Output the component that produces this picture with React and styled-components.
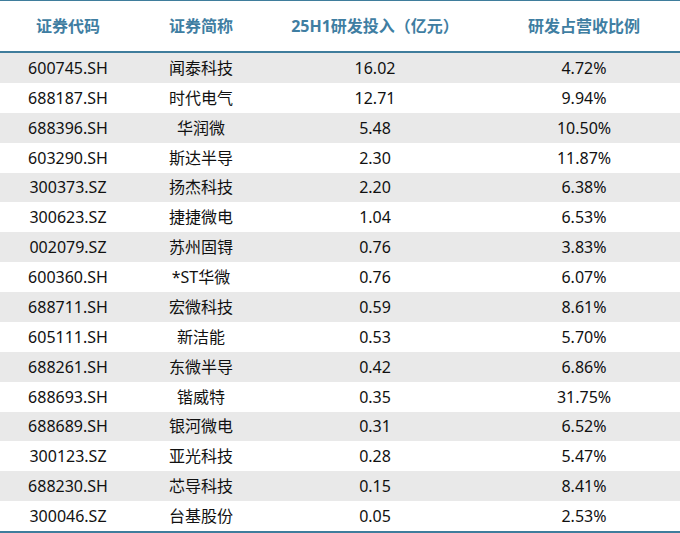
import styled, { createGlobalStyle } from "styled-components";

const rows = [
  ["600745.SH", "闻泰科技", "16.02", "4.72%"],
  ["688187.SH", "时代电气", "12.71", "9.94%"],
  ["688396.SH", "华润微", "5.48", "10.50%"],
  ["603290.SH", "斯达半导", "2.30", "11.87%"],
  ["300373.SZ", "扬杰科技", "2.20", "6.38%"],
  ["300623.SZ", "捷捷微电", "1.04", "6.53%"],
  ["002079.SZ", "苏州固锝", "0.76", "3.83%"],
  ["600360.SH", "*ST华微", "0.76", "6.07%"],
  ["688711.SH", "宏微科技", "0.59", "8.61%"],
  ["605111.SH", "新洁能", "0.53", "5.70%"],
  ["688261.SH", "东微半导", "0.42", "6.86%"],
  ["688693.SH", "锴威特", "0.35", "31.75%"],
  ["688689.SH", "银河微电", "0.31", "6.52%"],
  ["300123.SZ", "亚光科技", "0.28", "5.47%"],
  ["688230.SH", "芯导科技", "0.15", "8.41%"],
  ["300046.SZ", "台基股份", "0.05", "2.53%"],
];

const headers = ["证券代码", "证券简称", "25H1研发投入（亿元）", "研发占营收比例"];

const GlobalStyle = createGlobalStyle`
  body {
    margin: 0;
    background: #ffffff;
    font-family: "Noto Sans", "Noto Sans CJK SC", sans-serif;
  }
`;

const Table = styled.div`
  width: 680px;
  border-top: 1px solid #3f7d9c;
  border-bottom: 2px solid #3f7d9c;
`;

const Row = styled.div`
  display: grid;
  grid-template-columns: 136px 130px 218px 196px;
  height: ${(p) => (p.$head ? "50px" : "29.875px")};
  align-items: center;
  background: ${(p) => (p.$shaded ? "#e9e9e9" : "#ffffff")};
  border-bottom: ${(p) => (p.$head ? "2px solid #3f7d9c" : "none")};
`;

const Cell = styled.div`
  text-align: center;
  font-size: 16px;
  line-height: 20px;
  padding-left: ${(p) => (p.$last ? "4px" : "0")};
  color: ${(p) => (p.$head ? "#3f7ea2" : "#111111")};
  font-weight: ${(p) => (p.$head ? 700 : 400)};
  white-space: nowrap;
`;

export default function App() {
  return (
    <>
      <GlobalStyle />
      <Table>
        <Row $head>
          {headers.map((h, i) => (
            <Cell key={h} $head $last={i === 3}>
              {h}
            </Cell>
          ))}
        </Row>
        {rows.map((r, idx) => (
          <Row key={r[0]} $shaded={idx % 2 === 0}>
            {r.map((c, i) => (
              <Cell key={i} $last={i === 3}>
                {c}
              </Cell>
            ))}
          </Row>
        ))}
      </Table>
    </>
  );
}
